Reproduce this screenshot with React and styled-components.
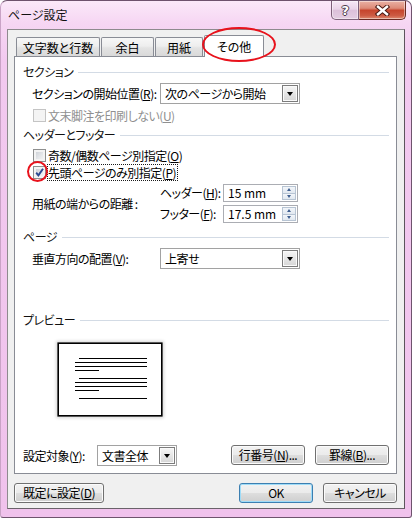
import React from "react";
import styled, { createGlobalStyle } from "styled-components";

const FONT = `"Noto Sans CJK JP", "Noto Sans CJK SC", "Noto Sans", sans-serif`;

const Global = createGlobalStyle`
  html, body { margin: 0; padding: 0; background: #ffffff; }
  body { font-family: ${FONT}; font-size: 12px; }
  *, *::before, *::after { box-sizing: border-box; }
  u { text-underline-offset: 1px; }
`;

const Window = styled.div`
  width: 412px;
  height: 518px;
  border: 1px solid #6e536d;
  border-left-color: #c9a3c6;
  border-radius: 7px 7px 3px 3px;
  background: linear-gradient(180deg, #fbe9f9 0px, #f6d6f3 22px, #f2c9ef 60px, #f0c2ec 100%);
  display: flex;
  flex-direction: column;
  font-family: ${FONT};
  font-feature-settings: "palt" 1;
  font-size: 12px;
  letter-spacing: -0.5px;
  color: #000;
  overflow: hidden;
`;

const TitleBar = styled.div`
  flex: none;
  height: 28px;
  display: flex;
  align-items: flex-start;
  padding: 0 5px 0 7px;
`;

const Title = styled.div`
  flex: 1;
  padding-top: 7px;
  line-height: 13px;
  font-size: 12px;
  letter-spacing: 0;
  color: #111;
`;

const CaptionButton = styled.div`
  height: 19px;
  width: ${(p) => p.$w}px;
  display: flex;
  align-items: center;
  justify-content: center;
  border: 1px solid ${(p) => (p.$close ? "#6a2a22" : "#7d6079")};
  border-top: none;
  border-left: ${(p) => (p.$close ? "none" : undefined)};
  border-radius: ${(p) => (p.$close ? "0 0 5px 0" : "0 0 0 5px")};
  background: ${(p) =>
    p.$close
      ? "linear-gradient(180deg, #eab1a4 0%, #dd8a78 40%, #c6452d 52%, #cc5a42 80%, #de8a70 100%)"
      : "linear-gradient(180deg, #f7e8f6 0%, #ead4e8 45%, #dcc0da 52%, #e4cde2 100%)"};
  box-shadow: inset 0 0 0 1px rgba(255, 255, 255, 0.45);
`;

const HelpGlyph = styled.span`
  font-family: "DejaVu Sans", sans-serif;
  font-weight: bold;
  font-size: 13px;
  line-height: 13px;
  color: #fff;
  text-shadow: -1px 0 #4a3a4a, 1px 0 #4a3a4a, 0 -1px #4a3a4a, 0 1px #4a3a4a;
`;

const Client = styled.div`
  flex: none;
  margin: 0 6px;
  height: 480px;
  border: 1px solid #8e8a8e;
  border-right-color: #5c545c;
  border-bottom-color: #6a626a;
  background: #f0f0f0;
  padding: 5px 7px 0 6px;
  display: flex;
  flex-direction: column;
`;

const TabStrip = styled.div`
  display: flex;
  align-items: flex-end;
  gap: 1px;
  padding-left: 2px;
  height: 21px;
  position: relative;
  z-index: 2;
`;

const Tab = styled.div`
  position: relative;
  width: ${(p) => p.$w}px;
  height: ${(p) => (p.$active ? 22 : 19)}px;
  margin-bottom: ${(p) => (p.$active ? -1 : 0)}px;
  border: 1px solid #898c95;
  border-bottom: none;
  border-radius: 2px 2px 0 0;
  background: ${(p) =>
    p.$active ? "#ffffff" : "linear-gradient(180deg, #f7f7f7 0%, #eeeeee 45%, #e3e3e3 55%, #d9d9d9 100%)"};
  display: flex;
  align-items: center;
  justify-content: center;
  padding-top: ${(p) => (p.$active ? 0 : 1)}px;
  line-height: 14px;
  font-size: 12px;
  letter-spacing: 0;
`;

const RedEllipse = styled.span`
  position: absolute;
  left: ${(p) => p.$l}px;
  top: ${(p) => p.$t}px;
  width: ${(p) => p.$w}px;
  height: ${(p) => p.$h}px;
  border: 2px solid #e8121c;
  border-radius: 50%;
  pointer-events: none;
  z-index: 3;
`;

const Panel = styled.div`
  flex: none;
  height: 418px;
  border: 1px solid #898c95;
  background: #ffffff;
  display: flex;
  flex-direction: column;
  padding: 0 7px 7px 8px;
`;

const SectionHead = styled.div`
  display: flex;
  align-items: center;
  gap: 5px;
  height: 14px;
  line-height: 14px;
  margin-top: ${(p) => p.$mt}px;
  color: #111;
  &::after {
    content: "";
    flex: 1;
    height: 1px;
    background: #d3dbe5;
  }
`;

const FieldRow = styled.div`
  display: flex;
  align-items: center;
  margin-top: ${(p) => p.$mt}px;
  padding-left: ${(p) => p.$pl ?? 9}px;
`;

const FieldLabel = styled.span`
  flex: none;
  width: ${(p) => p.$w}px;
  line-height: 14px;
  white-space: nowrap;
`;

const Combo = styled.div`
  flex: none;
  width: ${(p) => p.$w}px;
  height: 21px;
  border: 1px solid #a2a2a2;
  background: #fff;
  display: flex;
  align-items: center;
  padding: 0 1px 0 4px;
`;

const ComboText = styled.span`
  flex: 1;
  line-height: 15px;
  font-size: 12px;
  white-space: nowrap;
`;

const ComboArrow = styled.span`
  flex: none;
  width: 16px;
  height: 17px;
  border: 1px solid #7c7c7c;
  background: linear-gradient(180deg, #f6f6f6 0%, #e6e6e6 50%, #d6d6d6 100%);
  box-shadow: inset 0 0 0 1px #fafafa;
  display: flex;
  align-items: center;
  justify-content: center;
  &::after {
    content: "";
    width: 0;
    height: 0;
    border-left: 3.5px solid transparent;
    border-right: 3.5px solid transparent;
    border-top: 4px solid #000;
  }
`;

const CheckRow = styled.div`
  display: flex;
  align-items: center;
  height: 17px;
  margin-top: ${(p) => p.$mt}px;
  padding-left: 10px;
  color: ${(p) => (p.$disabled ? "#8f8f8f" : "#000")};
`;

const Box = styled.span`
  position: relative;
  flex: none;
  width: 13px;
  height: 13px;
  border: 1px solid ${(p) => (p.$disabled ? "#c4c4c4" : "#8e8f8f")};
  background: ${(p) =>
    p.$disabled ? "#f4f4f4" : "linear-gradient(135deg, #c6cad1 0%, #e4e6e9 55%, #f8f8f8 100%)"};
  box-shadow: inset 0 0 0 2px ${(p) => (p.$disabled ? "#f4f4f4" : "#f3f3f3")};
  display: flex;
  align-items: center;
  justify-content: center;
`;

const CheckLabel = styled.span`
  margin-left: 1px;
  border: 1px dotted ${(p) => (p.$focus ? "#1a1a1a" : "transparent")};
  padding: 0 1px 0 0;
  line-height: 15px;
  white-space: nowrap;
`;

const Distance = styled.div`
  display: flex;
  align-items: center;
  margin-top: ${(p) => p.$mt}px;
  padding-left: 9px;
`;

const SpinGrid = styled.div`
  display: grid;
  grid-template-columns: 63px 75px;
  row-gap: 3px;
  align-items: center;
`;

const Spin = styled.div`
  height: 18px;
  border: 1px solid #abadb3;
  background: #fff;
  display: flex;
  align-items: center;
  padding: 0 1px 0 4px;
`;

const SpinText = styled.span`
  flex: 1;
  line-height: 14px;
  letter-spacing: 0;
  white-space: nowrap;
`;

const SpinButtons = styled.span`
  flex: none;
  width: 14px;
  height: 14px;
  display: flex;
  flex-direction: column;
`;

const SpinHalf = styled.span`
  flex: 1;
  border: 1px solid #b7c4d3;
  border-top-width: ${(p) => (p.$down ? 0 : 1)}px;
  background: linear-gradient(180deg, #f3f6fa 0%, #e1e8f0 100%);
  display: flex;
  align-items: center;
  justify-content: center;
  &::after {
    content: "";
    width: 0;
    height: 0;
    border-left: 2.5px solid transparent;
    border-right: 2.5px solid transparent;
    ${(p) => (p.$down ? "border-top: 3px solid #3f5f90;" : "border-bottom: 3px solid #3f5f90;")}
  }
`;

const PreviewPage = styled.div`
  flex: none;
  margin-top: ${(p) => p.$mt}px;
  margin-left: 35px;
  width: 104px;
  height: 73px;
  border: 1px solid #000;
  background: #fff;
  box-shadow: 0 0 0 0.6px #000, 0 0 3px 2px rgba(0, 0, 0, 0.16);
`;

const BottomRow = styled.div`
  margin-top: auto;
  display: flex;
  align-items: flex-start;
  height: 21px;
`;

const RowLabel = styled.span`
  flex: none;
  width: ${(p) => p.$w}px;
  height: 21px;
  display: flex;
  align-items: center;
  line-height: 14px;
  white-space: nowrap;
`;

const Spacer = styled.span`
  flex: 1;
`;

const ButtonGroup = styled.div`
  display: flex;
  gap: 10px;
`;

const Button = styled.button`
  flex: none;
  width: ${(p) => p.$w}px;
  height: 20px;
  padding: 0;
  border: 1px solid ${(p) => (p.$default ? "#3c7fb1" : "#707070")};
  border-radius: 3px;
  background: linear-gradient(180deg, #f2f2f2 0%, #ebebeb 48%, #dddddd 52%, #cfcfcf 100%);
  box-shadow: inset 0 0 0 1px ${(p) => (p.$default ? "#9fdcf8" : "#fbfbfb")};
  font-family: ${FONT};
  font-feature-settings: "palt" 1;
  font-size: 12px;
  letter-spacing: -0.5px;
  line-height: 14px;
  color: #000;
  white-space: nowrap;
`;

const Footer = styled.div`
  display: flex;
  align-items: center;
  margin-top: 9px;
  height: 20px;
`;

function Check({ disabled, checked, focus, circled, children, mt }) {
  return (
    <CheckRow $mt={mt} $disabled={disabled}>
      <Box $disabled={disabled}>
        {checked && (
          <svg width="11" height="11" viewBox="0 0 11 11">
            <path d="M2.2 5.6 L4.4 8.4 L9 1.8" fill="none" stroke="#2d4a92" strokeWidth="1.9" strokeLinejoin="miter" />
          </svg>
        )}
        {circled && <RedEllipse $l={-7} $t={-6} $w={21} $h={21} />}
      </Box>
      <CheckLabel $focus={focus}>{children}</CheckLabel>
    </CheckRow>
  );
}

function SpinBox({ value }) {
  return (
    <Spin>
      <SpinText>{value}</SpinText>
      <SpinButtons>
        <SpinHalf />
        <SpinHalf $down />
      </SpinButtons>
    </Spin>
  );
}

const previewLines = [
  { y: 14.5, x1: 20, x2: 88 },
  { y: 18.5, x1: 16, x2: 88 },
  { y: 22.5, x1: 16, x2: 88 },
  { y: 26.5, x1: 16, x2: 40 },
  { y: 34.5, x1: 20, x2: 88 },
  { y: 38.5, x1: 16, x2: 88 },
  { y: 42.5, x1: 16, x2: 88 },
  { y: 46.5, x1: 16, x2: 40 },
  { y: 54.5, x1: 20, x2: 88 },
];

export default function App() {
  return (
    <>
      <Global />
      <Window>
        <TitleBar>
          <Title>ページ設定</Title>
          <CaptionButton $w={28}>
            <HelpGlyph>?</HelpGlyph>
          </CaptionButton>
          <CaptionButton $w={47} $close>
            <svg width="15" height="11" viewBox="0 0 15 11">
              <path d="M3 1.8 L12 9.2 M12 1.8 L3 9.2" stroke="#4a1a14" strokeWidth="4.4" strokeLinecap="square" />
              <path d="M3 1.8 L12 9.2 M12 1.8 L3 9.2" stroke="#ffffff" strokeWidth="2.4" strokeLinecap="square" />
            </svg>
          </CaptionButton>
        </TitleBar>

        <Client>
          <TabStrip>
            <Tab $w={84}>文字数と行数</Tab>
            <Tab $w={53}>余白</Tab>
            <Tab $w={48}>用紙</Tab>
            <Tab $w={60} $active>
              その他
              <RedEllipse $l={-3} $t={-9} $w={74} $h={35} />
            </Tab>
          </TabStrip>

          <Panel>
            <SectionHead $mt={8}>セクション</SectionHead>
            <FieldRow $mt={4}>
              <FieldLabel $w={128}>
                セクションの開始位置(<u>R</u>):
              </FieldLabel>
              <Combo $w={140}>
                <ComboText>次のページから開始</ComboText>
                <ComboArrow />
              </Combo>
            </FieldRow>
            <Check mt={3} disabled>
              文末脚注を印刷しない(<u>U</u>)
            </Check>

            <SectionHead $mt={4}>ヘッダーとフッター</SectionHead>
            <Check mt={5}>
              奇数/偶数ページ別指定(<u>O</u>)
            </Check>
            <Check mt={0} checked focus circled>
              先頭ページのみ別指定(<u>P</u>)
            </Check>
            <Distance $mt={3}>
              <FieldLabel $w={128}>用紙の端からの距離 :</FieldLabel>
              <SpinGrid>
                <FieldLabel $w={63}>
                  ヘッダー(<u>H</u>):
                </FieldLabel>
                <SpinBox value="15 mm" />
                <FieldLabel $w={63}>
                  フッター(<u>F</u>):
                </FieldLabel>
                <SpinBox value="17.5 mm" />
              </SpinGrid>
            </Distance>

            <SectionHead $mt={7}>ページ</SectionHead>
            <FieldRow $mt={4}>
              <FieldLabel $w={128}>
                垂直方向の配置(<u>V</u>):
              </FieldLabel>
              <Combo $w={140}>
                <ComboText>上寄せ</ComboText>
                <ComboArrow />
              </Combo>
            </FieldRow>

            <SectionHead $mt={44}>プレビュー</SectionHead>
            <PreviewPage $mt={16}>
              <svg width="102" height="71" viewBox="0 0 102 71">
                {previewLines.map((l, i) => (
                  <line key={i} x1={l.x1} x2={l.x2} y1={l.y} y2={l.y} stroke="#000" strokeWidth="1" />
                ))}
              </svg>
            </PreviewPage>

            <BottomRow>
              <RowLabel $w={74}>
                設定対象(<u>Y</u>):
              </RowLabel>
              <Combo $w={80}>
                <ComboText>文書全体</ComboText>
                <ComboArrow />
              </Combo>
              <Spacer />
              <ButtonGroup>
                <Button $w={74}>
                  行番号(<u>N</u>)...
                </Button>
                <Button $w={74}>
                  罫線(<u>B</u>)...
                </Button>
              </ButtonGroup>
            </BottomRow>
          </Panel>

          <Footer>
            <Button $w={90}>
              既定に設定(<u>D</u>)
            </Button>
            <Spacer />
            <ButtonGroup>
              <Button $w={74} $default>
                OK
              </Button>
              <Button $w={74}>キャンセル</Button>
            </ButtonGroup>
          </Footer>
        </Client>
      </Window>
    </>
  );
}
